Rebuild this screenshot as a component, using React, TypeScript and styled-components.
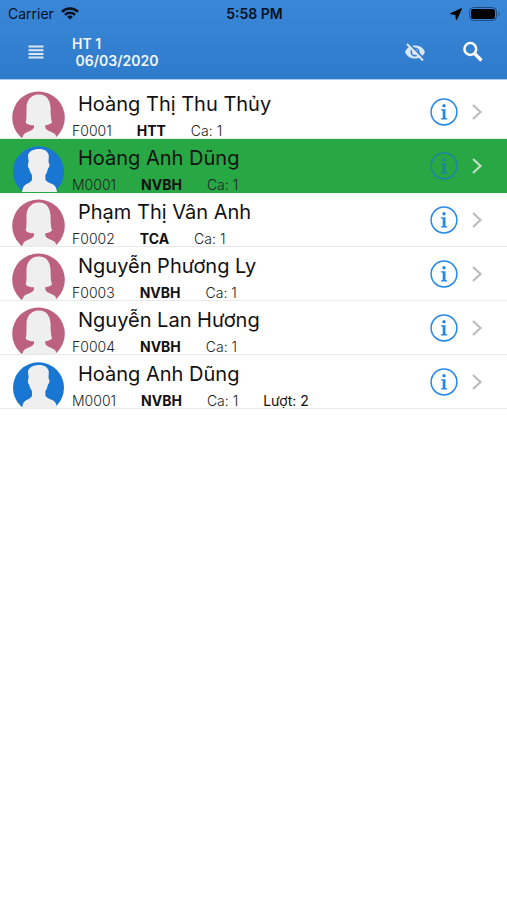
import React from "react";
import styled, { createGlobalStyle } from "styled-components";

const GlobalStyle = createGlobalStyle`
  * { box-sizing: border-box; }
  body {
    margin: 0;
    background: #fff;
    color: #111;
    font-family: Inter, "Noto Sans", sans-serif;
  }
  button { margin: 0; padding: 0; border: 0; background: none; font: inherit; color: inherit; cursor: pointer; }
  svg { display: block; }
`;

const Header = styled.header`
  height: 80px;
  background: linear-gradient(#3a87d8, #2f7bcb);
  border-bottom: 1px solid #a9cbed;
`;

const StatusBar = styled.div`
  display: grid;
  grid-template-columns: 1fr auto 1fr;
  align-items: center;
  height: 27px;
  padding: 0 6px 0 8px;
  color: #07111e;
  font-size: 14px;
  line-height: 16px;
`;

const StatusGroup = styled.div<{ $end?: boolean }>`
  display: flex;
  align-items: center;
  justify-content: ${(p) => (p.$end ? "flex-end" : "flex-start")};
  gap: 7px;
`;

const Clock = styled.time`
  font-weight: 600;
`;

const NavBar = styled.div`
  display: flex;
  align-items: center;
  height: 50px;
  padding: 0 22px 0 24px;
  color: #fff;
`;

const IconButton = styled.button<{ $soft?: boolean }>`
  display: grid;
  place-items: center;
  flex: none;
  width: 24px;
  height: 28px;
  opacity: ${(p) => (p.$soft ? 0.82 : 1)};
`;

const Title = styled.h1`
  flex: 1;
  margin: 0 0 0 24px;
  font-size: 14px;
  font-weight: 600;
  line-height: 17px;
  white-space: pre;
  color: #f1f7fd;
`;

const Actions = styled.div`
  display: flex;
  gap: 34px;
`;

const List = styled.ul`
  margin: 0;
  padding: 5px 0 0;
  list-style: none;
`;

const Row = styled.li<{ $selected?: boolean }>`
  display: flex;
  height: 54px;
  padding: 0 19px 0 12px;
  border-bottom: 1px solid ${(p) => (p.$selected ? "#28a745" : "#e9e9eb")};
  background: ${(p) => (p.$selected ? "#28a745" : "transparent")};
  overflow: hidden;
`;

const AvatarBox = styled.div`
  flex: none;
  width: 53px;
  height: 53px;
  padding-top: 6px;
  overflow: hidden;
`;

const Details = styled.div`
  flex: 1;
  min-width: 0;
  padding-left: 7px;
  white-space: nowrap;
`;

const Name = styled.div`
  padding: 6px 0 0 6px;
  font-size: 20px;
  line-height: 26px;
`;

const Meta = styled.div`
  display: flex;
  gap: 25px;
  padding-top: 5px;
  font-size: 14px;
  line-height: 17px;
`;

const Light = styled.span`
  font-weight: 300;
  color: #222;
`;

const Group = styled.strong`
  font-weight: 700;
`;

const RowActions = styled.div`
  display: flex;
  align-items: center;
  gap: 8px;
`;

const InfoButton = styled.button<{ $selected?: boolean }>`
  color: ${(p) => (p.$selected ? "#1a85a4" : "#2489e6")};
`;

const Chevron = styled.button<{ $selected?: boolean }>`
  display: grid;
  place-items: center;
  width: 22px;
  height: 28px;
  color: ${(p) => (p.$selected ? "#c4dcc9" : "#bdbdc1")};
`;

type Person = {
  name: string;
  code: string;
  group: string;
  shift: string;
  turn?: string;
  male?: boolean;
  selected?: boolean;
};

const people: Person[] = [
  { name: "Hoàng Thị Thu Thủy", code: "F0001", group: "HTT", shift: "Ca: 1" },
  { name: "Hoàng Anh Dũng", code: "M0001", group: "NVBH", shift: "Ca: 1", male: true, selected: true },
  { name: "Phạm Thị Vân Anh", code: "F0002", group: "TCA", shift: "Ca: 1" },
  { name: "Nguyễn Phương Ly", code: "F0003", group: "NVBH", shift: "Ca: 1" },
  { name: "Nguyễn Lan Hương", code: "F0004", group: "NVBH", shift: "Ca: 1" },
  { name: "Hoàng Anh Dũng", code: "M0001", group: "NVBH", shift: "Ca: 1", turn: "Lượt: 2", male: true },
];

const Avatar = ({ male }: { male?: boolean }) => (
  <svg width="53" height="47" viewBox="0 0 53 47" aria-hidden="true">
    <circle cx="26.5" cy="26.7" r={male ? 25.5 : 26.3} fill={male ? "#1976d2" : "#bd6180"} />
    {male ? (
      <path
        fill="#efefef"
        d="M26 4C31 3.500 36 5.500 36.800 10.500L36.500 17.500C38 18 37.500 22.500 35.800 24C35.300 27 34.500 28.500 33.400 30V34.500C35 38 40 38 42.500 40.500C44 42 44.500 44 45 47H10C10.500 44 11 42 12.500 40.500C15 38 19 38 20 34.500V30C18.800 28.500 18 27 17.400 24C15.700 22.500 15.500 18 16.700 17.500L16 10.500C16.500 7 20.500 4.300 26 4Z"
      />
    ) : (
      <path
        fill="#efefef"
        d="M26.500 3.500C34 3 38 8.500 38.500 16C38.700 22 38.500 27 40 31.500C38 33.700 35.500 34 33.300 34.200V36.500C34.500 40 40 40.500 43 43L45 47H10L12 43C15 40.500 20.500 40 22 36.500V34.200C19 34.200 15.500 34 13.700 31.500C15 27 14.300 22 14.500 16C15 8.500 19 4 26.500 3.500Z"
      />
    )}
  </svg>
);

const WifiIcon = () => (
  <svg width="18" height="13" viewBox="0 0 18 13" fill="none" stroke="currentColor" strokeWidth="2.500" aria-hidden="true">
    <path d="M1 4.800C5.500.4 12.500.4 17 4.800M3.900 7.800C6.800 5 11.200 5 14.100 7.800" />
    <path d="M6.200 9.700Q9 7.500 11.800 9.700L9 12.600Z" fill="currentColor" stroke="none" />
  </svg>
);

const LocationIcon = () => (
  <svg width="12" height="12" viewBox="0 0 12 12" aria-hidden="true">
    <path d="M.6 5.700 11.300.8 6.500 11.300 5.800 6.400Z" fill="#000" stroke="#000" strokeWidth="1.200" strokeLinejoin="round" />
  </svg>
);

const BatteryIcon = () => (
  <svg width="32" height="14" viewBox="0 0 32 14" aria-hidden="true">
    <rect x=".5" y=".5" width="27" height="13" rx="4" fill="none" stroke="#1c4b7f" />
    <rect x="2" y="2" width="24" height="10" rx="2.500" fill="#000" />
    <path d="M29.500 4.500Q31.500 7 29.500 9.500Z" fill="#1c4b7f" />
  </svg>
);

const MenuIcon = () => (
  <svg width="16" height="14" viewBox="0 0 16 14" stroke="currentColor" strokeWidth="2" aria-hidden="true">
    <path d="M.5 1.500h15M.5 5.200h15M.5 8.900h15M.5 12.600h15" />
  </svg>
);

const HiddenIcon = () => (
  <svg width="22" height="20" viewBox="0 0 22 20" fill="none" aria-hidden="true">
    <path d="M1 10C3 5.500 6.500 3.500 11 3.500S19 5.500 21 10C19 14.500 15.500 16.500 11 16.500S3 14.500 1 10Z" fill="currentColor" />
    <circle cx="11" cy="10" r="3.800" stroke="#3480cf" strokeWidth="1.600" />
    <path d="M4.500 1.200 20.500 17.200" stroke="#3480cf" strokeWidth="1.800" />
    <path d="M3 2 19 18.500" stroke="currentColor" strokeWidth="1.900" />
  </svg>
);

const SearchIcon = () => (
  <svg width="22" height="22" viewBox="0 0 22 22" fill="none" stroke="currentColor" aria-hidden="true">
    <circle cx="8.300" cy="8" r="5.900" strokeWidth="2.500" />
    <path d="m12.500 12.500 7 7" strokeWidth="3.300" />
  </svg>
);

const InfoIcon = () => (
  <svg width="28" height="28" viewBox="0 0 28 28" aria-hidden="true">
    <circle cx="14" cy="14" r="12.900" fill="none" stroke="currentColor" strokeWidth="1.500" />
    <circle cx="14" cy="7.800" r="1.700" fill="currentColor" />
    <path d="M11 11.300H15.500V20L17.300 20.500V21.500H10.900V20.500L12.700 20V12.700L11 12.300Z" fill="currentColor" />
  </svg>
);

const ChevronIcon = () => (
  <svg width="12" height="18" viewBox="0 0 12 18" fill="none" stroke="currentColor" strokeWidth="2.200" aria-hidden="true">
    <path d="m2 2 7.500 7L2 16" />
  </svg>
);

const PersonRow = ({ person }: { person: Person }) => (
  <Row $selected={person.selected}>
    <AvatarBox>
      <Avatar male={person.male} />
    </AvatarBox>
    <Details>
      <Name>{person.name}</Name>
      <Meta>
        <Light>{person.code}</Light>
        <Group>{person.group}</Group>
        <Light>{person.shift}</Light>
        {person.turn && <span>{person.turn}</span>}
      </Meta>
    </Details>
    <RowActions>
      <InfoButton $selected={person.selected} aria-label={`Thông tin ${person.name}`}>
        <InfoIcon />
      </InfoButton>
      <Chevron $selected={person.selected} aria-label={`Mở ${person.name}`}>
        <ChevronIcon />
      </Chevron>
    </RowActions>
  </Row>
);

export default function App() {
  return (
    <>
      <GlobalStyle />
      <Header>
        <StatusBar>
          <StatusGroup>
            <span>Carrier</span>
            <WifiIcon />
          </StatusGroup>
          <Clock>5:58 PM</Clock>
          <StatusGroup $end>
            <LocationIcon />
            <BatteryIcon />
          </StatusGroup>
        </StatusBar>
        <NavBar>
          <IconButton $soft aria-label="Menu">
            <MenuIcon />
          </IconButton>
          <Title>{"HT 1\n 06/03/2020"}</Title>
          <Actions>
            <IconButton $soft aria-label="Ẩn">
              <HiddenIcon />
            </IconButton>
            <IconButton aria-label="Tìm kiếm">
              <SearchIcon />
            </IconButton>
          </Actions>
        </NavBar>
      </Header>
      <main>
        <List>
          {people.map((person, i) => (
            <PersonRow key={i} person={person} />
          ))}
        </List>
      </main>
    </>
  );
}
